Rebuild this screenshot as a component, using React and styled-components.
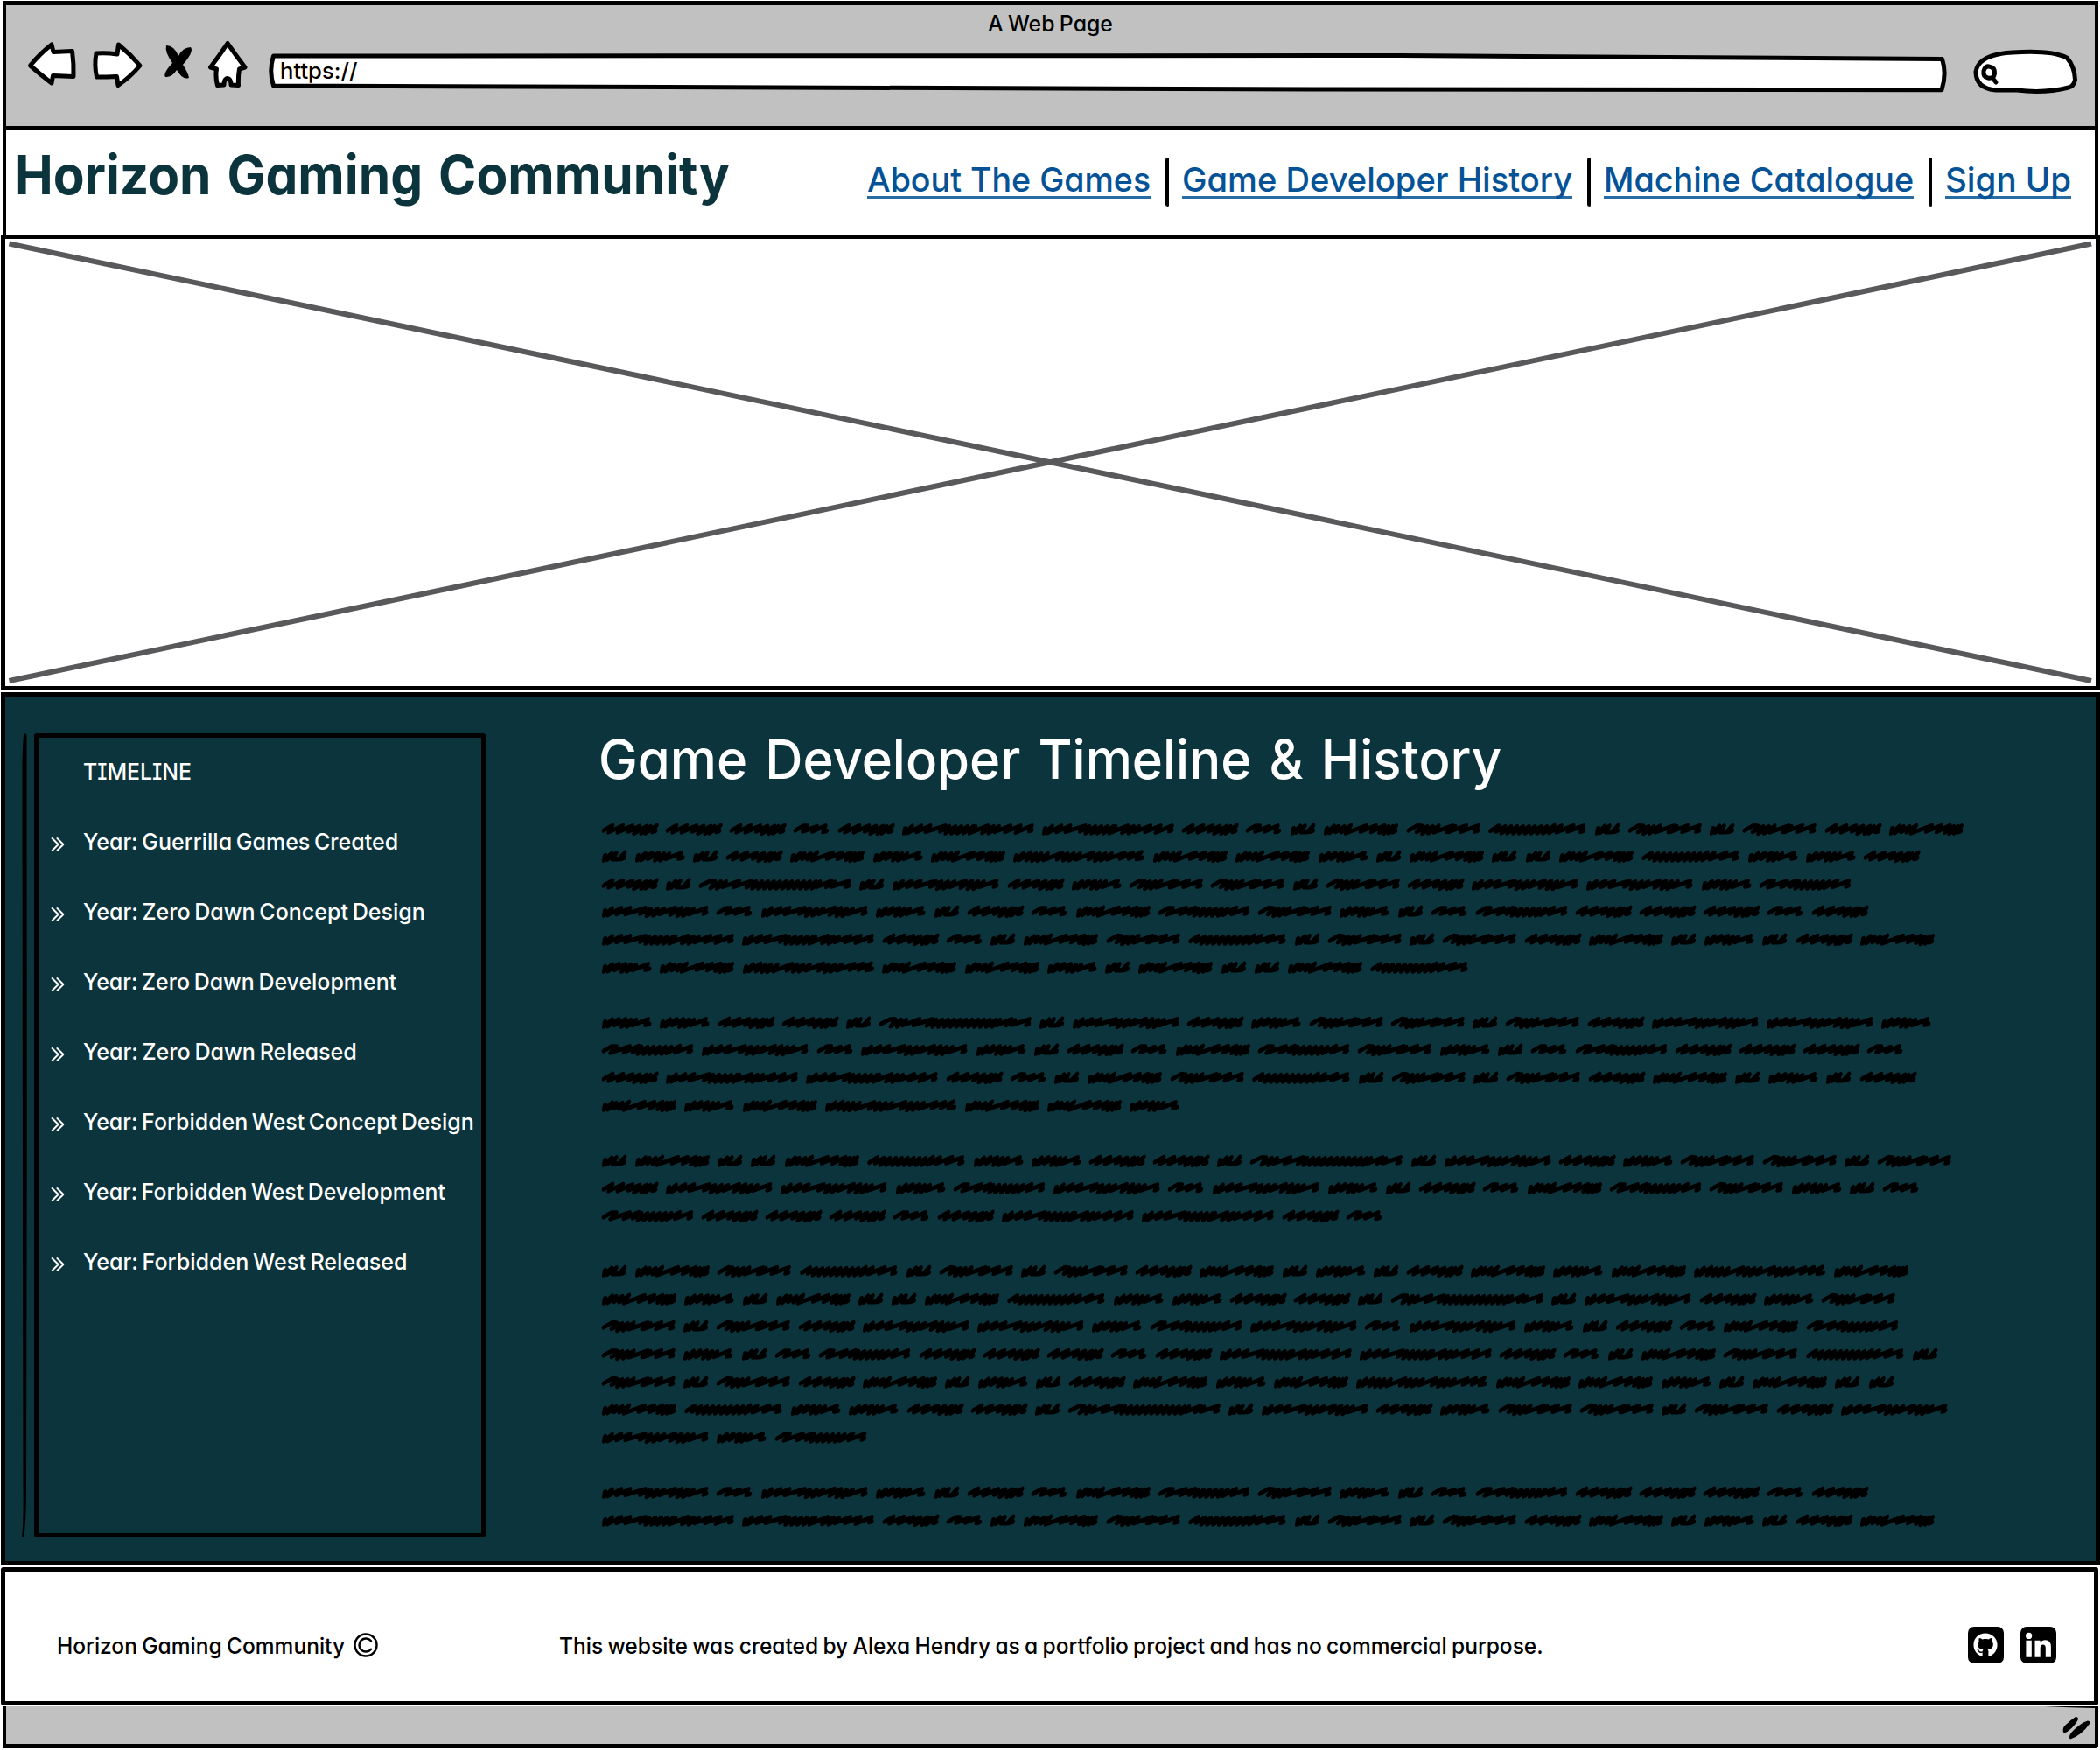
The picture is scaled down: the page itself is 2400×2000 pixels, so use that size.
import React, { useLayoutEffect, useRef, useState } from "react";
import styled, { createGlobalStyle } from "styled-components";
import { FaGithub } from "react-icons/fa";

const INK = "#000";
const TEAL = "#0c343c";
const CHROME = "#c1c1c1";
const LINK = "#055396";

const GlobalStyle = createGlobalStyle`
  *, *::before, *::after { box-sizing: border-box; }
  body {
    margin: 0;
    background: #fff;
    color: ${INK};
    font-family: Inter, "Liberation Sans", sans-serif;
    font-feature-settings: "cv11" 1, "cv08" 1;
  }
  svg { display: block; }
`;

/* ---------- text set to a measured width ---------- */

const FitBox = styled.span`
  display: block;
  flex: none;
  width: ${(p) => p.$width}px;
  height: ${(p) => p.$line}px;
  padding-top: ${(p) => p.$drop}px;
  line-height: ${(p) => p.$line}px;
  font-size: ${(p) => p.$size}px;
  font-weight: ${(p) => p.$weight || 500};
  word-spacing: ${(p) => p.$space}em;
  color: ${(p) => p.$color || "inherit"};
  white-space: nowrap;
`;

const FitInner = styled.span`
  display: inline-block;
  transform-origin: 0 50%;
`;

function FitText({ width, size, line, weight, color, drop = 1, space = -0.05, children }) {
  const ref = useRef(null);
  const [scale, setScale] = useState(1);
  useLayoutEffect(() => {
    const natural = ref.current.offsetWidth;
    if (natural) setScale(width / natural);
  }, [width, children]);
  return (
    <FitBox
      $width={width}
      $size={size}
      $line={line}
      $weight={weight}
      $color={color}
      $drop={drop}
      $space={space}
    >
      <FitInner ref={ref} style={{ transform: `scaleX(${scale})` }}>
        {children}
      </FitInner>
    </FitBox>
  );
}

/* ---------- page shell ---------- */

const Page = styled.div`
  width: 2400px;
  height: 2000px;
  padding-top: 1px;
  display: flex;
  flex-direction: column;
  overflow: hidden;
`;

const Toolbar = styled.header`
  flex: none;
  height: 148px;
  margin: 0 2px 0 3px;
  border: 5px solid ${INK};
  border-width: 5px 4px 5px 4px;
  background: ${CHROME};
`;

const WindowTitle = styled.div`
  height: 38px;
  display: flex;
  justify-content: center;
`;

const ToolRow = styled.div`
  display: flex;
  align-items: flex-start;
  padding-left: 22px;
`;

const Glyph = styled.svg`
  flex: none;
  margin-right: ${(p) => p.$gap || 0}px;
  fill: #fff;
  stroke: ${INK};
  stroke-width: 5;
  stroke-linejoin: round;
  stroke-linecap: round;
`;

const Address = styled.div`
  position: relative;
  width: 1924px;
  height: 64px;
  margin-right: 24px;
  padding-left: 16px;
`;

const AddressOutline = styled(Glyph)`
  position: absolute;
  inset: 0;
`;

const AddressText = styled.div`
  position: relative;
`;

/* ---------- site header ---------- */

const SiteHeader = styled.div`
  flex: none;
  height: 119px;
  margin: 0 2px 0 3px;
  padding: 0 27px 0 10px;
  border: solid ${INK};
  border-width: 0 4px;
  display: flex;
  align-items: flex-start;
  justify-content: space-between;
`;

const Nav = styled.nav`
  display: flex;
  margin-top: 31px;
`;

const NavLink = styled.a`
  display: block;
  height: 44px;
  margin-top: 3px;
  color: ${LINK};
  text-decoration: none;
  background: linear-gradient(#286ca6, #286ca6) 0 100% / 100% 3px no-repeat;
`;

const Divider = styled.span`
  width: 4px;
  height: 56px;
  margin: 0 15px 0 17px;
  background: ${INK};
  border-radius: 3px 1px 2px 3px;
`;

/* ---------- hero ---------- */

const Hero = styled.section`
  flex: none;
  height: 521px;
  margin: 0 0 2px 1px;
  border: 5px solid ${INK};
`;

/* ---------- main ---------- */

const Main = styled.main`
  flex: none;
  height: 998px;
  margin: 0 0 2px 1px;
  border: 5px solid ${INK};
  background: ${TEAL};
  display: flex;
  align-items: flex-start;
  padding-left: 18px;
`;

const Rail = styled.svg`
  flex: none;
  margin: 42px 7px 0 0;
`;

const Sidebar = styled.aside`
  flex: none;
  width: 516px;
  height: 919px;
  margin-top: 42px;
  border: 5px solid ${INK};
  border-radius: 3px;
`;

const Timeline = styled.ul`
  list-style: none;
  margin: -2px 0 0;
  padding: 0 0 0 14px;
  color: #fff;
`;

const TimelineItem = styled.li`
  height: 80px;
  display: grid;
  grid-template-columns: 37px 1fr;
  align-items: center;
`;

const Marker = styled.svg`
  margin-top: 7px;
  fill: none;
  stroke: #fff;
  stroke-width: 1.9;
  stroke-linecap: round;
  stroke-linejoin: round;
`;

const Article = styled.article`
  margin-left: 129px;
`;

const Heading = styled.h1`
  margin: 0 0 -6.3px;
  font: inherit;
  color: #fff;
`;

const Paragraph = styled.div`
  margin-bottom: 31.6px;
  padding-left: 4px;
`;

const Line = styled.div`
  display: flex;
  align-items: center;
  height: 31.6px;
`;

const Scribble = styled.svg`
  flex: none;
  overflow: visible;
  fill: none;
  stroke: ${INK};
  stroke-width: 14;
  stroke-linejoin: round;
  stroke-linecap: round;
`;

/* ---------- footer ---------- */

const Footer = styled.footer`
  flex: none;
  height: 158px;
  margin: 0 2px 1px 1px;
  padding: 20px 43px 0 59px;
  border: 5px solid ${INK};
  border-radius: 3px;
  display: flex;
  align-items: center;
`;

const CopyMark = styled.svg`
  flex: none;
  margin: 0 207px 0 10px;
  fill: none;
  stroke: ${INK};
  stroke-width: 2.5;
  stroke-linecap: round;
`;

const Social = styled.div`
  display: flex;
  gap: 18.5px;
  margin-left: auto;
`;

const Badge = styled.a`
  width: 41.5px;
  height: 41.5px;
  border-radius: 7px;
  background: ${INK};
  color: #fff;
  display: flex;
  align-items: center;
  justify-content: center;
`;

const StatusBar = styled.div`
  flex: none;
  height: 48px;
  margin: 0 2px 0 3px;
  border: solid ${INK};
  border-width: 0 4px 5px 4px;
  background: ${CHROME};
  border-radius: 0 0 4px 2px;
  display: flex;
  justify-content: flex-end;
`;

/* ---------- scribbled words ---------- */

const dense = (from, to) => {
  let out = "";
  for (let x = from; x <= to; x += 20) out += ` ${x},12 ${x - 6},31`;
  return out;
};

const OPEN = "10,17 11,31 32,11 24,30";

// drawn width, advance, stroke points
const WORDS = {
  A: [188, 73, "8,23 33,9 26,28 68,9 56,28 100,10 92,26 124,11 112,32 147,11 136,32 160,12 150,31 180,9 172,27 181,25"],
  B: [121, 50.8, "8,23 30,10 44,10 34,26 76,12 66,26 104,10 102,27 113,25"],
  D: [84, 38.1, "10,17 11,31 30,11 22,29 46,10 40,28 58,28 74,9 66,27 77,24"],
  E: [168, 66.3, `${OPEN} 54,10 46,27 76,10 70,31 94,12 88,31 112,12 106,27 152,10 148,26 160,24`],
  F: [250, 94.3, `${OPEN} 46,12 44,27 66,12 62,28 88,9 78,31 140,9 126,26 172,9 162,27 200,9 190,29 214,12 206,32 228,12 222,31 240,10 234,28 242,25`],
  C: [443, 160.3, `${OPEN} 62,10 52,27 92,10 82,27 142,10 130,26${dense(156, 236)} 244,12 236,28 284,10 272,30 304,12 294,31 322,12 314,27 360,10 348,27 394,10 384,29 432,10 428,25 435,23`],
  G: [441, 159.8, `${OPEN} 56,9 48,30 74,12 68,32 92,12 86,32 114,12 106,30 162,10 150,28 180,12 172,31 200,12 192,31 222,12 214,28 266,9 256,28 286,12 278,32 306,12 298,31 328,12 318,28 370,10 360,26 398,9 390,26 426,8 416,27 434,24`],
  I: [358, 131.3, `${OPEN} 62,10 52,27 92,10 82,27 142,10 130,26 162,12 154,32 184,12 176,31 206,12 196,27 242,9 232,29 264,10 256,32 284,12 276,32 304,12 294,27 346,10 342,26 350,23`],
  H: [510, 183.2, `8,23 34,10 50,10 42,30 70,12 64,31 88,12 82,27 132,10 118,27 174,10 162,28${dense(188, 394)} 402,12 396,27 440,10 428,27 452,13 446,26 500,10 494,26 502,24`],
  J: [247, 93.3, "8,23 32,9 48,11 36,27 66,12 56,32 84,12 76,31 104,10 94,28 150,10 138,27 160,12 144,27 196,9 184,27 236,9 230,26 239,24"],
  K: [307, 114.3, `8,23 30,10 46,10 32,28 90,10 76,27 120,9 106,26${dense(130, 216)} 230,12 220,29 258,9 248,27 296,10 292,26 299,23`],
  L: [328, 121.9, `10,24 32,10 30,26${dense(54, 200)} 218,9 208,30 242,10 232,28 282,9 268,26 316,10 312,27 321,24`],
};

const PARAGRAPHS = [
  [
    "AAABACCABDFJLDJDJAF",
    "DEDAFEFGFFEDFDDFLEEA",
    "ADHDIAEJJDJAIIEK",
    "IBIEDABFKJEDBKAAABA",
    "CCABDFJLDJDJAFDEDAF",
    "EFGFFEDFDDFL",
  ],
  ["EEAADHDIAEJJDJAIIE", "KIBIEDABFKJEDBKAAAB", "ACCABDFJLDJDJAFDEDA", "FEFGFFE"],
  ["DFDDFLEEAADHDIAEJJDJ", "AIIEKIBIEDABFKJEDB", "KAAABACCAB"],
  [
    "DFJLDJDJAFDEDAFEFGF",
    "FEDFDDFLEEAADHDIAEJ",
    "JDJAIIEKIBIEDABFK",
    "JEDBKAAABACCABDFJLD",
    "JDJAFDEDAFEFGFFEDFDD",
    "FLEEAADHDIAEJJDJAI",
    "IEK",
  ],
  ["IBIEDABFKJEDBKAAABA", "CCABDFJLDJDJAFDEDAF"],
];

const UNIT = 2.925;

function Word({ kind }) {
  const [, advance, points] = WORDS[kind];
  return (
    <Scribble width={advance} height={40 / UNIT} viewBox={`0 0 ${advance * UNIT} 40`}>
      <polyline points={points} transform="translate(4.2 -3) skewX(-13) scale(1 1.14)" />
    </Scribble>
  );
}

const EVENTS = [
  ["Year: Guerrilla Games Created", 360],
  ["Year: Zero Dawn Concept Design", 391],
  ["Year: Zero Dawn Development", 358],
  ["Year: Zero Dawn Released", 313],
  ["Year: Forbidden West Concept Design", 447],
  ["Year: Forbidden West Development", 414],
  ["Year: Forbidden West Released", 370],
];

const LINKS = [
  ["About The Games", 324],
  ["Game Developer History", 446.5],
  ["Machine Catalogue", 354],
  ["Sign Up", 144],
];

export default function App() {
  return (
    <Page>
      <GlobalStyle />
      <Toolbar>
        <WindowTitle>
          <FitText width={143} size={25.5} line={41} drop={0}>A Web Page</FitText>
        </WindowTitle>
        <ToolRow>
          <Glyph width="60" height="60" viewBox="29 44 60 60" $gap={15}>
            <path d="M34.5 75 Q45 62 59 51 L61 59.5 Q72 59 82.5 58.5 Q84.5 73 84 87.5 Q72 87 60.5 86.5 L59 95 Q46 85 34.5 75Z" />
          </Glyph>
          <Glyph width="61" height="60" viewBox="104 44 61 60" $gap={21}>
            <path d="M110 61 Q122 60 134 62 L135.5 51 Q149 62 160 75 Q149 88 135 97.5 L133.5 87.5 Q122 88 110.5 88 Q107.5 74 110 61Z" />
          </Glyph>
          <Glyph width="36" height="60" viewBox="186 44 36 60" $gap={12}>
            <path
              fill={INK}
              strokeWidth="0"
              d="M190 52 Q199 52 204 64 Q209 54 218 54 Q222 59 209 74 Q215 83 216 89 Q209 92 202 80 Q196 89 189 88 Q186 84 197 72 Q188 59 190 52Z"
            />
          </Glyph>
          <Glyph width="52" height="60" viewBox="234 44 52 60" $gap={18}>
            <path d="M260 49.5 Q252 62 240.5 77 L247.5 79 Q246 88 248.5 97.5 L256 97 Q256 90 260 89.5 Q264 90 264 97 L272.5 97.5 Q272 88 273.5 79 L280 77 Q270 64 260 49.5Z" />
          </Glyph>
          <Address>
            <AddressOutline width="1924" height="64" viewBox="304 44 1924 64">
              <path d="M312.5 64 L1600 63.5 L2219.5 67.5 Q2225 84 2219 102.8 L1500 102 L312.5 98 Q307 81 312.5 64Z" />
            </AddressOutline>
            <AddressText>
              <FitText width={88} size={25} line={73}>https://</FitText>
            </AddressText>
          </Address>
          <Glyph width="125" height="66" viewBox="2252 44 125 66">
            <path d="M2281 103 Q2258 101 2258 82 Q2261 62 2300 60 Q2344 57 2362 66 Q2371 76 2371.5 91 Q2370 99 2364 100 Q2336 107 2305 103Z" />
            <path d="M2273 76 Q2280 77 2279.5 84 Q2279 90 2272 89 Q2266 88 2267 81 Q2269 75 2273 76Z M2277 89 L2281 94" />
          </Glyph>
        </ToolRow>
      </Toolbar>

      <SiteHeader>
        <FitText width={817} size={62} line={100} weight={700} color={TEAL} space={0.07}>
          Horizon Gaming Community
        </FitText>
        <Nav>
          {LINKS.map(([label, width], i) => (
            <React.Fragment key={label}>
              {i > 0 && <Divider />}
              <NavLink href="#">
                <FitText width={width} size={38.5} line={44} drop={0} space={0}>{label}</FitText>
              </NavLink>
            </React.Fragment>
          ))}
        </Nav>
      </SiteHeader>

      <Hero>
        <svg width="2389" height="511" viewBox="6 273 2389 511">
          <path d="M10.5 278.5 L2390 778 M10.5 778 L2390 278.5" stroke="#59595b" strokeWidth="6" fill="none" />
        </svg>
      </Hero>

      <Main>
        <Rail width="8" height="920" viewBox="24 838 8 920">
          <path d="M27.5 838.5 Q25 850 25.5 900 L26 1400 L26.5 1700 Q27 1740 25 1756 L27 1757 Q30 1742 30 1700 L30.8 1300 L30.5 840 Q29.5 837.5 27.5 838.5Z" fill={INK} />
        </Rail>
        <Sidebar>
          <Timeline>
            <TimelineItem>
              <span />
              <FitText width={124} size={26} line={40}>TIMELINE</FitText>
            </TimelineItem>
            {EVENTS.map(([label, width]) => (
              <TimelineItem key={label}>
                <Marker width="16" height="18" viewBox="0 0 16 18">
                  <path d="M1.6 2 L8.6 9 L1.6 16 M7.4 2 L14.4 9 L7.4 16" />
                </Marker>
                <FitText width={width} size={25.5} line={40} space={-0.08}>{label}</FitText>
              </TimelineItem>
            ))}
          </Timeline>
        </Sidebar>
        <Article>
          <Heading>
            <FitText width={1032} size={62} line={142} space={0.07}>
              Game Developer Timeline &amp; History
            </FitText>
          </Heading>
          {PARAGRAPHS.map((lines, p) => (
            <Paragraph key={p}>
              {lines.map((line, l) => (
                <Line key={l}>
                  {[...line].map((kind, w) => (
                    <Word key={w} kind={kind} />
                  ))}
                </Line>
              ))}
            </Paragraph>
          ))}
        </Article>
      </Main>

      <Footer>
        <FitText width={329} size={25.5} line={40}>Horizon Gaming Community</FitText>
        <CopyMark width="28" height="28" viewBox="0 0 28 28">
          <circle cx="14" cy="14" r="12.5" />
          <path d="M20 9.2 A7.6 7.6 0 1 0 20 18.8" />
        </CopyMark>
        <FitText width={1125} size={25.5} line={40}>
          This website was created by Alexa Hendry as a portfolio project and has no commercial purpose.
        </FitText>
        <Social>
          <Badge href="#">
            <FaGithub size={28} />
          </Badge>
          <Badge href="#">
            <svg width="41.5" height="41.5" viewBox="0 0 41.5 41.5" fill="#fff">
              <circle cx="9.6" cy="10.4" r="3.6" />
              <path d="M6.4 15.8H12.8V34.8H6.4Z M16.5 15.8H22.6V18.4Q24.6 15.3 28.4 15.3Q34.9 15.3 34.9 23.2V34.8H28.8V24.6Q28.8 20.6 25.8 20.6Q22.7 20.6 22.7 24.6V34.8H16.5Z" />
            </svg>
          </Badge>
        </Social>
      </Footer>

      <StatusBar>
        <svg width="64" height="43" viewBox="2330 1950 64 43">
          <path d="M2336 1950 L2394 1950 L2394 1952 Q2365 1951.5 2336 1950Z" />
          <path d="M2372 1962 Q2376 1962 2374.5 1966 Q2368 1977 2358.5 1981 Q2355.5 1975 2362 1970 Q2366 1966 2372 1962Z" />
          <path d="M2386 1966.5 Q2389.5 1967 2388 1970 Q2379 1983 2366 1987.5 Q2362.5 1984 2370 1977 Q2378 1969 2386 1966.5Z" />
        </svg>
      </StatusBar>
    </Page>
  );
}
